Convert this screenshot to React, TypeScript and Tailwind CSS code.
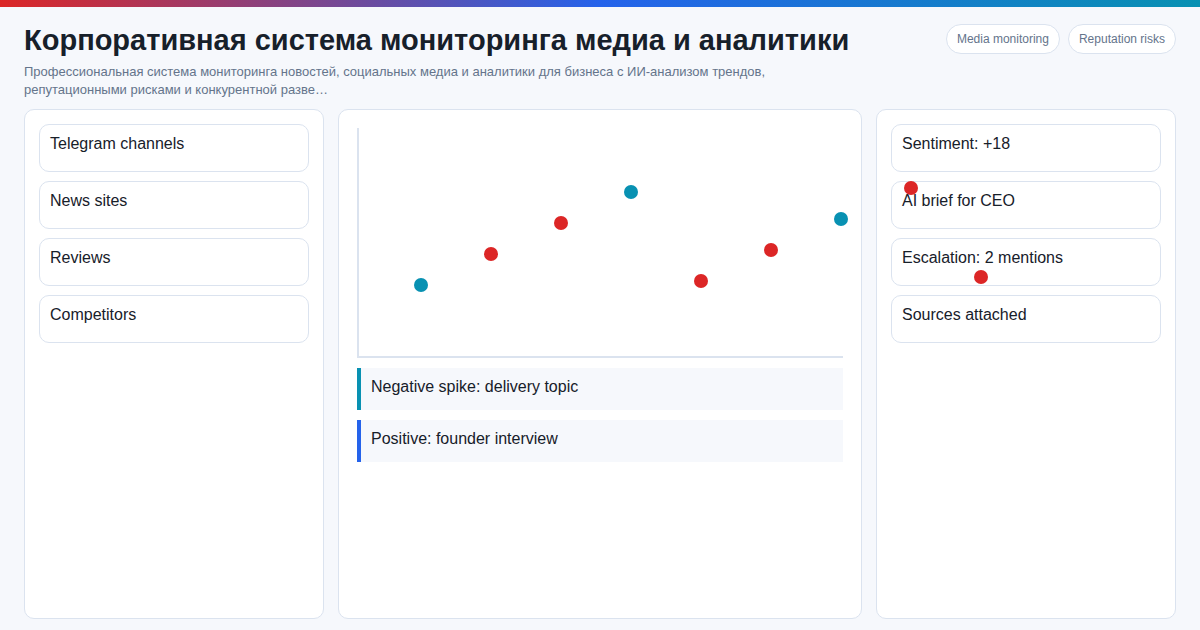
const sources = ['Telegram channels', 'News sites', 'Reviews', 'Competitors'];
const stats = ['Sentiment: +18', 'AI brief for CEO', 'Escalation: 2 mentions', 'Sources attached'];

// dots run past the chart on purpose, same as the reference
const dots = [
  { x: 55, y: 150, cls: 'bg-[#0891b2]' },
  { x: 125, y: 119, cls: 'bg-[#dc2626]' },
  { x: 195, y: 88, cls: 'bg-[#dc2626]' },
  { x: 265, y: 57, cls: 'bg-[#0891b2]' },
  { x: 335, y: 146, cls: 'bg-[#dc2626]' },
  { x: 405, y: 115, cls: 'bg-[#dc2626]' },
  { x: 475, y: 84, cls: 'bg-[#0891b2]' },
  { x: 545, y: 53, cls: 'bg-[#dc2626]' },
  { x: 615, y: 142, cls: 'bg-[#dc2626]' },
];

const Card = ({ text }: { text: string }) => (
  <div className="h-12 rounded-[10px] border border-[#dbe3ef] bg-white px-[10px] py-[10px] text-base leading-[18px] text-[#17202a]">
    {text}
  </div>
);

const App = () => {
  return (
    <div className="flex h-[630px] w-[1200px] flex-col overflow-hidden bg-[#f6f8fc] font-['Liberation_Sans',Arial,sans-serif]">
      <div className="h-[7px] shrink-0 bg-[linear-gradient(90deg,#dc2626,#2563eb,#0891b2)]" />

      <div className="flex flex-1 flex-col px-6 pt-[17px] pb-[11px]">
        <header className="flex h-[85px] shrink-0 items-start justify-between">
          <div className="w-[760px]">
            <h1 className="whitespace-nowrap text-[29px] leading-[32px] font-bold text-[#17202a]">
              Корпоративная система мониторинга медиа и аналитики
            </h1>
            <p className="mt-[7px] text-[13px] leading-[18px] text-[#64748b]">
              Профессиональная система мониторинга новостей, социальных медиа и аналитики для бизнеса с ИИ-анализом трендов, репутационными рисками и конкурентной разве…
            </p>
          </div>
          <div className="flex gap-2">
            <span className="flex h-[30px] items-center rounded-full border border-[#dbe3ef] bg-white px-[10px] text-xs text-[#64748b]">
              Media monitoring
            </span>
            <span className="flex h-[30px] items-center rounded-full border border-[#dbe3ef] bg-white px-[10px] text-xs text-[#64748b]">
              Reputation risks
            </span>
          </div>
        </header>

        <main className="flex flex-1 gap-[14px]">
          <aside className="flex w-[300px] flex-col gap-[9px] rounded-[10px] border border-[#dbe3ef] bg-white p-[14px]">
            {sources.map((s) => (
              <Card key={s} text={s} />
            ))}
          </aside>

          <section className="w-[524px] rounded-[10px] border border-[#dbe3ef] bg-white p-[18px]">
            <div className="relative h-[230px] border-b-2 border-l-2 border-[#dbe3ef]">
              {dots.map((d) => (
                <span
                  key={d.x}
                  className={`absolute h-[14px] w-[14px] rounded-full ${d.cls}`}
                  style={{ left: d.x, top: d.y }}
                />
              ))}
            </div>
            <div className="mt-[10px] h-[42px] border-l-4 border-[#0891b2] bg-[#f6f8fc] px-[10px] py-[10px] text-base leading-[18px] text-[#17202a]">
              Negative spike: delivery topic
            </div>
            <div className="mt-[10px] h-[42px] border-l-4 border-[#2563eb] bg-[#f6f8fc] px-[10px] py-[10px] text-base leading-[18px] text-[#17202a]">
              Positive: founder interview
            </div>
          </section>

          <aside className="flex w-[300px] flex-col gap-[9px] rounded-[10px] border border-[#dbe3ef] bg-white p-[14px]">
            {stats.map((s) => (
              <Card key={s} text={s} />
            ))}
          </aside>
        </main>
      </div>
    </div>
  );
};

export default App;
